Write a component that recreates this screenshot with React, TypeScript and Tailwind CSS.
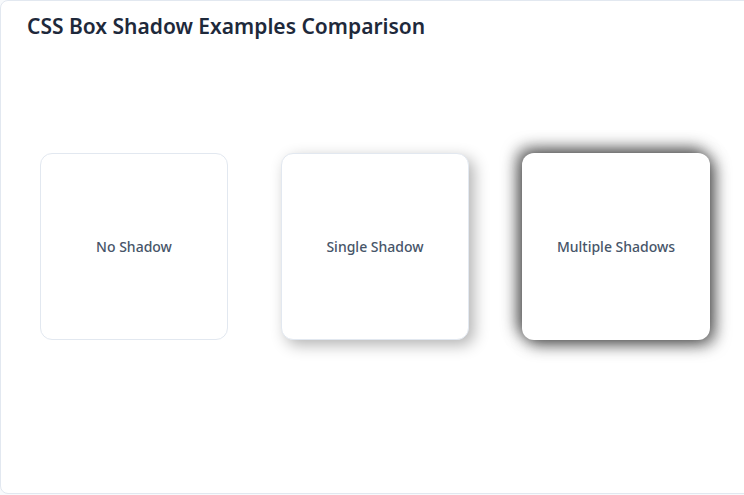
const boxes = [
  { label: "No Shadow", shadow: "border border-[#e2e8f0]" },
  {
    label: "Single Shadow",
    shadow: "border border-[#e2e8f0] shadow-[5px_5px_15px_rgba(0,0,0,0.3)]",
  },
  {
    label: "Multiple Shadows",
    shadow:
      "shadow-[-5px_-5px_15px_rgba(0,0,0,0.5),5px_5px_15px_rgba(0,0,0,0.5),0_0_20px_rgba(0,0,0,0.3)]",
  },
];

export default function App() {
  return (
    <div className="h-[495px] w-[744px] overflow-hidden bg-[#f8fafc] font-['Noto_Sans',sans-serif]">
      <div className="flex h-[494px] w-[780px] flex-col rounded-lg border border-[#e2e8f0] bg-white pl-[26px] pt-[10px]">
        <h1 className="text-[21px] font-semibold text-[#1e293b]">
          CSS Box Shadow Examples Comparison
        </h1>
        <div className="mt-[110px] flex gap-[53px] pl-[13px]">
          {boxes.map((b) => (
            <div
              key={b.label}
              className={`flex h-[187px] w-[188px] items-center justify-center rounded-xl bg-white ${b.shadow}`}
            >
              <span className="text-[14px] font-medium text-[#475569]">{b.label}</span>
            </div>
          ))}
        </div>
      </div>
    </div>
  );
}
